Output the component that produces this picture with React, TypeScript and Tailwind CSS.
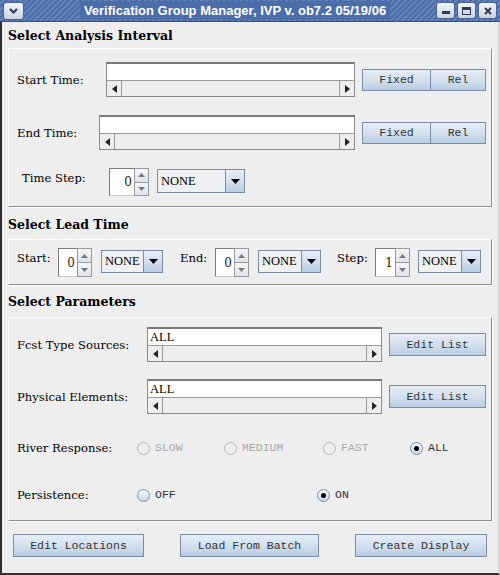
import React from "react";

const serif = "font-['DejaVu_Serif',serif]";
const times = "font-['Liberation_Serif',serif]";
const mono = "font-['Liberation_Mono',monospace]";

function Tri({ dir, className }: { dir: "left" | "right" | "up" | "down"; className?: string }) {
  const pts = {
    left: "5,0 5,8 0,4",
    right: "0,0 0,8 5,4",
    up: "0,4 7,4 3.5,0",
    down: "0,0 7,0 3.5,4",
  }[dir];
  const vb = dir === "left" || dir === "right" ? "0 0 5 8" : "0 0 7 4";
  const size = dir === "left" || dir === "right" ? { w: 5, h: 8 } : { w: 7, h: 4 };
  return (
    <svg width={size.w} height={size.h} viewBox={vb} className={className}>
      <polygon points={pts} fill="currentColor" />
    </svg>
  );
}

function MetalButton({ label, className }: { label: string; className: string }) {
  return (
    <div
      className={`${className} flex items-center justify-center border border-[#7d8ca4] bg-gradient-to-b from-[#e6eef7] via-[#d3e0ee] to-[#b8cce3] text-[11.5px] text-[#333] ${mono}`}
    >
      {label}
    </div>
  );
}

function ScrollField({ className, value }: { className: string; value?: string }) {
  return (
    <div className={`${className} h-[35px] flex flex-col border border-[#8a8a8a] border-t-2 border-t-[#7a7a7a] bg-[#eeeeee]`}>
      <div className={`h-[17px] bg-white border-b border-[#9a9a9a] pl-[2px] text-[12.5px] leading-[17px] text-black ${times}`}>
        {value}
      </div>
      <div className="flex-1 flex justify-between">
        <div className="w-[15px] flex items-center justify-center border-r border-[#9a9a9a] text-[#222]">
          <Tri dir="left" />
        </div>
        <div className="w-[15px] flex items-center justify-center border-l border-[#9a9a9a] text-[#222]">
          <Tri dir="right" />
        </div>
      </div>
    </div>
  );
}

function Spinner({ value, className }: { value: string; className: string }) {
  return (
    <div className={`${className} flex`}>
      <div
        className={`flex-1 bg-white border-l border-t border-[#7a7a7a] border-b border-b-[#c8c8c8] flex items-center justify-end pr-[2px] text-[12px] text-[#222] ${serif}`}
      >
        {value}
      </div>
      <div className="w-[15px] flex flex-col border border-[#9a9a9a]">
        <div className="flex-1 flex items-center justify-center border-b border-[#9a9a9a] bg-gradient-to-b from-[#f4f6f9] to-[#dfe3e8] text-[#7a7a7a]">
          <Tri dir="up" />
        </div>
        <div className="flex-1 flex items-center justify-center bg-gradient-to-b from-[#f4f6f9] to-[#dfe3e8] text-[#7a7a7a]">
          <Tri dir="down" />
        </div>
      </div>
    </div>
  );
}

function Combo({ className }: { className: string }) {
  return (
    <div className={`${className} flex border border-[#7d8ca4] bg-[#eef0f3]`}>
      <div className={`flex-1 flex items-center pl-[3px] text-[12.5px] text-black ${times}`}>NONE</div>
      <div className="w-[19px] flex items-center justify-center border-l border-[#7d8ca4] bg-gradient-to-b from-[#e6eef7] via-[#d3e0ee] to-[#b8cce3] text-black">
        <svg width="9" height="5" viewBox="0 0 9 5">
          <polygon points="0,0 9,0 4.5,5" fill="currentColor" />
        </svg>
      </div>
    </div>
  );
}

function Radio({
  label,
  checked,
  disabled,
  className,
}: {
  label: string;
  checked?: boolean;
  disabled?: boolean;
  className: string;
}) {
  return (
    <div className={`${className} flex items-center gap-[5px]`}>
      <div
        className={`w-[13px] h-[13px] rounded-full border flex items-center justify-center ${
          disabled
            ? "border-[#b4b4b4] bg-[#eeeeee]"
            : "border-[#7f8ea4] bg-gradient-to-b from-[#f5f8fb] to-[#c9d8e8]"
        }`}
      >
        {checked && <div className="w-[5px] h-[5px] rounded-full bg-black" />}
      </div>
      <span className={`text-[11.5px] ${mono} ${disabled ? "text-[#a8a8a8]" : "text-[#333]"}`}>{label}</span>
    </div>
  );
}

function Panel({ className, children }: { className: string; children: React.ReactNode }) {
  return (
    <div
      className={`${className} ml-[6px] w-[484px] border border-t-white border-l-white border-r-[#8e8e8e] border-b-[#8e8e8e] shadow-[1px_1px_0_#ffffff] pl-[8px]`}
    >
      {children}
    </div>
  );
}

function Heading({ className, text }: { className: string; text: string }) {
  return (
    <div className={`${className} pl-[6px]`}>
      <div className={`text-[12.5px] leading-[16px] font-bold text-black ${serif}`}>{text}</div>
    </div>
  );
}

function TitleButton({ children }: { children: React.ReactNode }) {
  return (
    <div className="w-[19px] h-[17px] rounded-[3px] border border-[#4d628a] bg-gradient-to-b from-[#f2f5f9] to-[#c9d3e2] flex items-center justify-center text-[#2d3a52]">
      {children}
    </div>
  );
}

export default function App() {
  const label = `text-[11.6px] leading-[16px] text-black ${serif}`;
  return (
    <div className="w-[500px] h-[575px] flex flex-col overflow-hidden bg-[#eeeeee]">
      {/* Title bar */}
      <div className="h-[22px] flex items-center bg-[repeating-linear-gradient(135deg,#4b6eaa_0px,#4b6eaa_2px,#6483bb_2px,#6483bb_4px)] border-b border-[#35507f]">
        <div className="ml-[3px] w-[21px] h-[18px] rounded-[3px] border border-[#4d628a] bg-gradient-to-b from-[#f2f5f9] to-[#c9d3e2] flex items-center justify-center text-[#2d3a52]">
          <svg width="9" height="6" viewBox="0 0 9 6">
            <polyline points="1,1 4.5,4.5 8,1" fill="none" stroke="currentColor" strokeWidth="2" />
          </svg>
        </div>
        <div className="flex-1 flex justify-center pl-[10px]">
          <span className="px-[4px] bg-[#4b6eaa] text-white font-bold text-[13px] font-['Liberation_Sans',sans-serif]">
            Verification Group Manager, IVP v. ob7.2 05/19/06
          </span>
        </div>
        <div className="flex gap-[2px] mr-[3px]">
          <TitleButton>
            <div className="w-[8px] h-[3px] bg-current mt-[4px]" />
          </TitleButton>
          <TitleButton>
            <div className="w-[9px] h-[8px] border border-current border-t-[3px]" />
          </TitleButton>
          <TitleButton>
            <svg width="8" height="8" viewBox="0 0 8 8">
              <path d="M1 1 L7 7 M7 1 L1 7" stroke="currentColor" strokeWidth="2" />
            </svg>
          </TitleButton>
        </div>
      </div>

      {/* Body */}
      <div className="flex-1 flex flex-col border-l-2 border-l-[#2f2f2f] border-b-2 border-b-[#2f2f2f] border-r-2 border-r-[#d4d4d4]">
        <Heading className="h-[26px] pt-[6px]" text="Select Analysis Interval" />
        <Panel className="h-[159px]">
          <div className="mt-[13px] flex items-center">
            <div className={`w-[89px] ${label}`}>Start Time:</div>
            <ScrollField className="w-[249px]" />
            <div className="ml-[7px] flex">
              <MetalButton label="Fixed" className="w-[69px] h-[22px]" />
              <MetalButton label="Rel" className="w-[55px] h-[22px] border-l-0" />
            </div>
          </div>
          <div className="mt-[18px] flex items-center">
            <div className={`w-[82px] ${label}`}>End Time:</div>
            <ScrollField className="w-[256px]" />
            <div className="ml-[7px] flex">
              <MetalButton label="Fixed" className="w-[69px] h-[22px]" />
              <MetalButton label="Rel" className="w-[55px] h-[22px] border-l-0" />
            </div>
          </div>
          <div className="mt-[18px] flex items-start">
            <div className={`ml-[5px] w-[87px] mt-[2px] ${label}`}>Time Step:</div>
            <Spinner value="0" className="w-[40px] h-[28px]" />
            <Combo className="ml-[8px] mt-[1px] w-[88px] h-[24px]" />
          </div>
        </Panel>

        <Heading className="h-[32px] pt-[10px]" text="Select Lead Time" />
        <Panel className="h-[46px]">
          <div className="mt-[8px] flex items-start">
            <div className={`w-[41px] mt-[2px] ${label}`}>Start:</div>
            <Spinner value="0" className="w-[34px] h-[29px]" />
            <Combo className="ml-[9px] mt-[2px] w-[62px] h-[23px]" />
            <div className={`ml-[17px] w-[35px] mt-[2px] ${label}`}>End:</div>
            <Spinner value="0" className="w-[34px] h-[29px]" />
            <Combo className="ml-[9px] mt-[2px] w-[63px] h-[23px]" />
            <div className={`ml-[16px] w-[38px] mt-[2px] ${label}`}>Step:</div>
            <Spinner value="1" className="w-[35px] h-[29px]" />
            <Combo className="ml-[8px] mt-[2px] w-[63px] h-[23px]" />
          </div>
        </Panel>

        <Heading className="h-[32px] pt-[9px]" text="Select Parameters" />
        <Panel className="h-[204px]">
          <div className="mt-[9px] flex items-center">
            <div className={`w-[130px] ${label}`}>Fcst Type Sources:</div>
            <ScrollField className="w-[235px]" value="ALL" />
            <MetalButton label="Edit List" className="ml-[7px] w-[97px] h-[23px]" />
          </div>
          <div className="mt-[17px] flex items-center">
            <div className={`w-[130px] ${label}`}>Physical Elements:</div>
            <ScrollField className="w-[235px]" value="ALL" />
            <MetalButton label="Edit List" className="ml-[7px] w-[97px] h-[23px]" />
          </div>
          <div className="mt-[26px] flex items-center h-[16px]">
            <div className={`w-[120px] ${label}`}>River Response:</div>
            <Radio label="SLOW" disabled className="w-[87px]" />
            <Radio label="MEDIUM" disabled className="w-[99px]" />
            <Radio label="FAST" disabled className="w-[87px]" />
            <Radio label="ALL" checked className="w-[70px]" />
          </div>
          <div className="mt-[31px] flex items-center h-[16px]">
            <div className={`w-[120px] ${label}`}>Persistence:</div>
            <Radio label="OFF" className="w-[180px]" />
            <Radio label="ON" checked className="w-[60px]" />
          </div>
        </Panel>

        <div className="mt-[13px] ml-[11px] flex">
          <MetalButton label="Edit Locations" className="w-[131px] h-[23px]" />
          <MetalButton label="Load From Batch" className="ml-[36px] w-[139px] h-[23px]" />
          <MetalButton label="Create Display" className="ml-[36px] w-[132px] h-[23px]" />
        </div>
      </div>
    </div>
  );
}
